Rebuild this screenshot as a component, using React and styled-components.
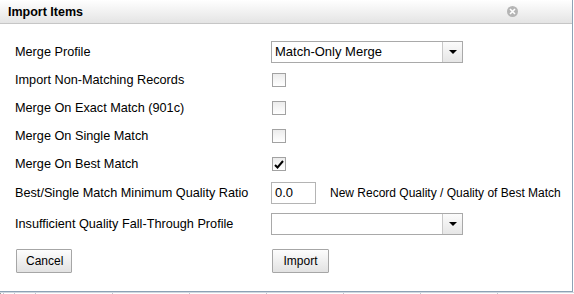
import React from 'react';
import styled, {createGlobalStyle} from "styled-components";

const GlobalStyle = createGlobalStyle`
  html, body {
    margin: 0;
    padding: 0;
    background: #fff;
    font-family: "Liberation Sans", Arial, sans-serif;
    font-size: 12px;
    color: #000;
  }
`;

const Page = styled.div`
  width: 574px;
  height: 294px;
  overflow: hidden;
  background: #fff;
`;

const Dialog = styled.div`
  width: 572px;
  height: 291px;
  border-right: 1px solid #8da2b5;
  border-bottom: 1px solid #8da2b5;
  background: #fff;
  display: flex;
  flex-direction: column;
`;

const Header = styled.div`
  height: 23px;
  border-bottom: 1px solid #c6c6c6;
  background: linear-gradient(#ffffff, #e4e4e4);
  display: flex;
  align-items: center;
  justify-content: space-between;
  padding: 0 54px 0 8px;
`;

const Title = styled.h1`
  margin: 0;
  font-size: 12.5px;
  font-weight: 700;
  line-height: 16px;
`;

const Close = styled.span`
  width: 11px;
  height: 11px;
  border-radius: 50%;
  background: #b5b5b5;
  display: flex;
  align-items: center;
  justify-content: center;
  margin-top: -1px;
`;

const Body = styled.div`
  padding: 14px 0 0 15px;
`;

const Row = styled.div`
  display: grid;
  grid-template-columns: 256px auto;
  align-items: center;
  height: ${p => p.$h || 28}px;
`;

const Label = styled.div`
  font-size: 12.7px;
  line-height: 15px;
  white-space: nowrap;
`;

const Control = styled.div`
  display: flex;
  align-items: center;
  gap: 14px;
`;

const Select = styled.div`
  width: 190px;
  height: 20px;
  border: 1px solid #a9a9a9;
  display: flex;
  background: #fff;
  font-size: 13px;
`;

const SelectText = styled.div`
  flex: 1;
  padding: 0 3px;
  line-height: 20px;
  white-space: nowrap;
`;

const Arrow = styled.div`
  width: 19px;
  border-left: 1px solid #c8c8c8;
  background: linear-gradient(#fbfbfb, #e6e6e6);
  display: flex;
  align-items: center;
  justify-content: center;

  &::after {
    content: "";
    border-left: 4px solid transparent;
    border-right: 4px solid transparent;
    border-top: 4px solid #000;
  }
`;

const Check = styled.span`
  width: 12px;
  height: 12px;
  border: 1px solid #a2a2a2;
  background: linear-gradient(#ececec, #ffffff);
  display: flex;
  align-items: center;
  justify-content: center;
  margin-left: 1px;
`;

const Input = styled.div`
  width: 40px;
  height: 20px;
  border: 1px solid #b4b4b4;
  line-height: 20px;
  padding-left: 3px;
  box-sizing: content-box;
  font-size: 13px;
`;

const Hint = styled.span`
  font-size: 12px;
`;

const Footer = styled.div`
  display: grid;
  grid-template-columns: 256px auto;
  padding: 9px 0 0 16px;
`;

const Button = styled.button`
  justify-self: start;
  height: 24px;
  padding: 0 9px;
  border: 1px solid #a6a6a6;
  background: linear-gradient(#fdfdfd, #e2e2e2);
  font-family: "Liberation Sans", Arial, sans-serif;
  font-size: 12px;
  color: #000;
  border-radius: 1px;
  width: ${p => p.$w}px;
`;

const Grid = styled.div`
  height: 2px;
  display: flex;
  border-top: 1px solid #d0d8e0;

  span {
    width: 76px;
    border-right: 1px solid #c0c8d0;
  }
  span:first-child { width: 2px; border-left: 1px solid #999; }
  span:nth-child(2) { width: 10px; }
  span:nth-child(3) { width: 20px; }
`;

const CheckMark = () => (
  <svg width="10" height="9" viewBox="0 0 10 9">
    <path d="M1 5 L3.5 7.5 L9 1" fill="none" stroke="#000" strokeWidth="2" />
  </svg>
);

const CloseIcon = () => (
  <svg width="7" height="7" viewBox="0 0 7 7">
    <path d="M1 1 L6 6 M6 1 L1 6" stroke="#fff" strokeWidth="1.6" />
  </svg>
);

const rows = [
  {label: 'Import Non-Matching Records', checked: false},
  {label: 'Merge On Exact Match (901c)', checked: false},
  {label: 'Merge On Single Match', checked: false},
  {label: 'Merge On Best Match', checked: true},
];

const App = () => (
  <Page>
    <GlobalStyle/>
    <Dialog>
      <Header>
        <Title>Import Items</Title>
        <Close><CloseIcon/></Close>
      </Header>
      <Body>
        <Row>
          <Label>Merge Profile</Label>
          <Select>
            <SelectText>Match-Only Merge</SelectText>
            <Arrow/>
          </Select>
        </Row>
        {rows.map(r => (
          <Row key={r.label} $h={r.h}>
            <Label>{r.label}</Label>
            <Control>
              <Check>{r.checked && <CheckMark/>}</Check>
            </Control>
          </Row>
        ))}
        <Row $h={30}>
          <Label>Best/Single Match Minimum Quality Ratio</Label>
          <Control>
            <Input>0.0</Input>
            <Hint>New Record Quality / Quality of Best Match</Hint>
          </Control>
        </Row>
        <Row $h={32}>
          <Label>Insufficient Quality Fall-Through Profile</Label>
          <Select>
            <SelectText/>
            <Arrow/>
          </Select>
        </Row>
      </Body>
      <Footer>
        <Button $w={56}>Cancel</Button>
        <Button $w={57}>Import</Button>
      </Footer>
    </Dialog>
    <Grid>
      <span/><span/><span/><span/><span/><span/><span/><span/><span/>
    </Grid>
  </Page>
);

export default App;
